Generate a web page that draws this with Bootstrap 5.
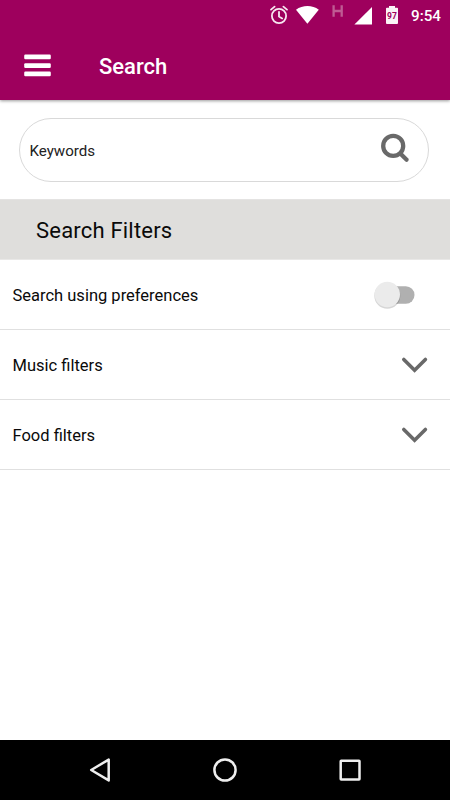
<!DOCTYPE html>
<html lang="en">
<head>
<meta charset="utf-8">
<meta name="viewport" content="width=device-width, initial-scale=1">
<title>Search</title>
<link href="https://cdn.jsdelivr.net/npm/bootstrap@5.3.0/dist/css/bootstrap.min.css" rel="stylesheet">
<style>
  body { font-family: Roboto, sans-serif; color: #0a0a0a; line-height: 1; overflow: hidden; }
  svg { display: block; flex: none; }
  .app-header { height: 100px; background: #9e005d; box-shadow: 0 1px 3px rgba(0,0,0,.4); }
  .status-bar { height: 31px; padding-right: 10px; }
  .status-time { font-size: 15.2px; font-weight: 500; width: 29px; margin-left: 11px; padding-top: 2px; white-space: nowrap; }
  .title-bar { height: 69px; padding-left: 24px; }
  .page-title { font-size: 22px; font-weight: 500; margin-left: 48px; padding-top: 3px; }
  .search-wrap { height: 99px; padding: 18px 21px 17px 19px; }
  .search-box { height: 64px; border-color: #d9d9d9 !important; padding: 0 18px 0 9.500px; }
  .search-hint { font-size: 15.1px; color: #222; padding-top: 3px; }
  .section-head { height: 61px; background: #dfdedc; border-bottom: 1px solid #e9e8e7; padding: 4px 0 0 36px; font-size: 22px; letter-spacing: .2px; border-top: 1px solid #e4e3e2; }
  .filter-row { height: 70px; padding: 0 22px 0 12.500px !important; border-color: #e0e0e0 !important; border-width: 0 0 1px !important; font-size: 16.5px; color: #0a0a0a; }
  .filter-row span { padding-top: 3px; }
  .switch-track { width: 40px; height: 28px; margin-right: 13px; }
  .nav-keys { height: 60px; background: #000; }
</style>
<script src="https://cdn.jsdelivr.net/npm/bootstrap@5.3.0/dist/js/bootstrap.bundle.min.js"></script>
</head>
<body class="bg-white">
<div class="d-flex flex-column vh-100">
  <header class="app-header text-white">
    <div class="status-bar d-flex align-items-center justify-content-end">
      <svg width="132" height="31" viewBox="268 0 132 31">
        <g fill="none" stroke="#f7e8f1" stroke-width="1.8" stroke-linecap="round">
          <circle cx="279" cy="16" r="7.1"/>
          <path d="M279 11.8v4.6l3.2 2M271 9.6l3.6-3M287 9.6l-3.6-3"/>
        </g>
        <path d="M296 9.7C302.5 4.8 312.5 4.8 318.8 9.7L307.4 23.7Z" fill="#fff"/>
        <path d="M333.6 5.300v11.400M341.700 5.300v11.400M333.600 11h8.100" fill="none" stroke="#bf5b93" stroke-width="2.300"/>
        <path d="M372 7v17.6h-17.6Z" fill="#fff"/>
        <path d="M389 6h6v1.7h2.1q.9 0 .9.9v14.5q0 .9-.9.9h-10.2q-.9 0-.9-.9V8.600q0-.9.9-.9H389Z" fill="#fbf3f7"/>
        <text x="392" y="18.500" text-anchor="middle" font-family="Roboto, sans-serif" font-size="8.500" font-weight="700" fill="#9e005d">97</text>
      </svg>
      <span class="status-time">9:54</span>
    </div>
    <div class="title-bar d-flex align-items-center">
      <svg width="27" height="24" viewBox="0 0 27 24" fill="#fff">
        <rect x=".2" y=".500" width="26.600" height="4.700" rx="1.2"/>
        <rect x=".2" y="9.200" width="26.600" height="4.700" rx="1.2"/>
        <rect x=".2" y="17.500" width="26.600" height="4.700" rx="1.2"/>
      </svg>
      <h1 class="page-title mb-0">Search</h1>
    </div>
  </header>
  <main class="flex-grow-1">
    <div class="search-wrap">
      <div class="search-box border rounded-pill d-flex align-items-center justify-content-between">
        <span class="search-hint">Keywords</span>
        <svg width="30" height="34" viewBox="0 0 30 34" fill="none" stroke="#696969">
          <circle cx="13.200" cy="12.900" r="10" stroke-width="4.300"/>
          <path d="M20.300 20.500l6.300 6.300" stroke-width="4.200" stroke-linecap="round"/>
        </svg>
      </div>
    </div>
    <h2 class="section-head d-flex align-items-center fw-normal mb-0">Search Filters</h2>
    <div class="list-group list-group-flush">
      <div class="filter-row list-group-item d-flex align-items-center justify-content-between">
        <span>Search using preferences</span>
        <svg class="switch-track" viewBox="0 0 40 28" overflow="visible">
          <rect x="10" y="5.200" width="29.500" height="17.500" rx="8.700" fill="#b0b0b0"/>
          <circle cx="12.300" cy="14.800" r="13" fill="#000" opacity=".16"/>
          <circle cx="12.300" cy="13.500" r="12.700" fill="#ebebeb"/>
        </svg>
      </div>
      <div class="filter-row list-group-item d-flex align-items-center justify-content-between">
        <span>Music filters</span>
        <svg width="27" height="18" viewBox="0 0 27 18" fill="none" stroke="#696969" stroke-width="3.600" stroke-linecap="round"><path d="M2.800 3.500l10.800 10.800L24.400 3.500"/></svg>
      </div>
      <div class="filter-row list-group-item d-flex align-items-center justify-content-between">
        <span>Food filters</span>
        <svg width="27" height="18" viewBox="0 0 27 18" fill="none" stroke="#696969" stroke-width="3.600" stroke-linecap="round"><path d="M2.800 3.500l10.800 10.800L24.400 3.500"/></svg>
      </div>
    </div>
  </main>
  <footer class="nav-keys d-flex align-items-center justify-content-center">
    <svg width="280" height="30" viewBox="85 755 280 30" fill="none" stroke="#eee" stroke-width="2.500" stroke-linejoin="round">
      <path d="M108.700 759.600v20.800L91.200 770Z"/>
      <circle cx="225" cy="770" r="10.600"/>
      <rect x="340.700" y="760.700" width="18.800" height="18.800" rx=".5"/>
    </svg>
  </footer>
</div>
</body>
</html>
